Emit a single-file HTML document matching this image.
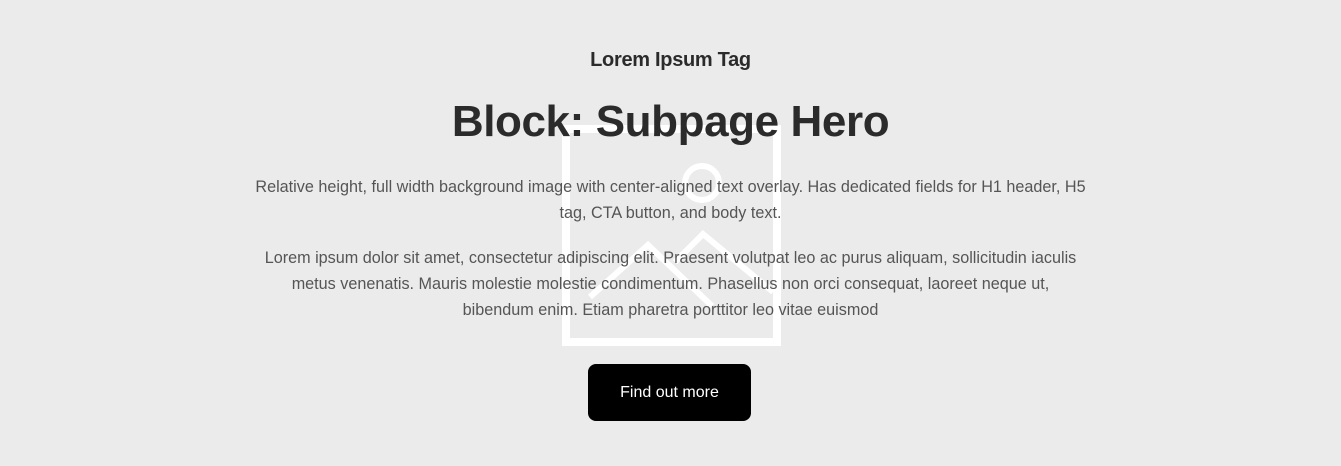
<!DOCTYPE html>
<html><head><style>
body{margin:0;width:1341px;height:466px;background:#ebebeb;font-family:"Liberation Sans",sans-serif;position:relative;overflow:hidden}
svg{position:absolute;left:0;top:0}
.c{position:absolute;left:0;width:1341px;text-align:center;white-space:nowrap}
.tag{top:49px;font-size:20px;font-weight:bold;color:#2b2b2b;letter-spacing:-0.3px}
h1{margin:0;top:97px;font-size:44px;font-weight:bold;color:#2b2b2b;letter-spacing:-0.4px}
p.c{margin:0;font-size:16.2px;line-height:26px;color:#555;letter-spacing:0}
.btn{position:absolute;left:588px;top:364px;width:163px;height:57px;background:#000;border-radius:8px;color:#fff;font-size:16px;line-height:57px;text-align:center}
</style></head><body>
<svg width="1341" height="466">
<g fill="none" stroke="#fff" stroke-width="8">
<rect x="566" y="129" width="211" height="213"/>
</g>
<g fill="none" stroke="#fff" stroke-width="6">
<circle cx="702" cy="183" r="17"/>
<polyline points="590,297 648,245 712,306"/>
<polyline points="675,262 703,234 773,292"/>
</g>
</svg>
<div class="c tag">Lorem Ipsum Tag</div>
<h1 class="c">Block: Subpage Hero</h1>
<p class="c" style="top:174px">Relative height, full width background image with center-aligned text overlay. Has dedicated fields for H1 header, H5<br>tag, CTA button, and body text.</p>
<p class="c" style="top:245px">Lorem ipsum dolor sit amet, consectetur adipiscing elit. Praesent volutpat leo ac purus aliquam, sollicitudin iaculis<br>metus venenatis. Mauris molestie molestie condimentum. Phasellus non orci consequat, laoreet neque ut,<br>bibendum enim. Etiam pharetra porttitor leo vitae euismod</p>
<div class="btn">Find out more</div>
</body></html>
